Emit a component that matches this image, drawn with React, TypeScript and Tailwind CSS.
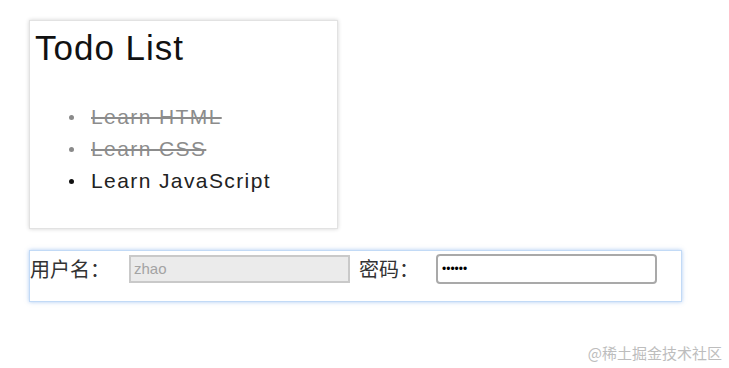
import React from "react";

const items = [
  { text: "Learn HTML", done: true },
  { text: "Learn CSS", done: true },
  { text: "Learn JavaScript", done: false },
];

export default function App() {
  return (
    <div className="relative w-[729px] h-[368px] bg-white overflow-hidden" style={{ fontFamily: '"Liberation Sans", Arial, "Noto Sans CJK SC", sans-serif' }}>
      <div className="pl-[29px] pt-[20px]">
        <div className="w-[309px] h-[209px] bg-white border border-[#e2e2e2] shadow-[0_0_4px_rgba(0,0,0,0.18)] pl-[5px] pt-[9px]">
          <h1 className="text-[35px] leading-none tracking-[1px] text-[#111]">Todo List</h1>
          <div className="mt-[36px] flex flex-col">
            {items.map((it) => (
              <div key={it.text} className="flex items-center h-[32px]">
                <span className={`ml-[34px] w-[5px] h-[5px] rounded-full ${it.done ? "bg-[#8a8a8a]" : "bg-[#111]"}`} />
                <span className={`ml-[17px] text-[21px] leading-[32px] tracking-[1.4px] ${it.done ? "text-[#8c8c8c] line-through decoration-[#8c8c8c]" : "text-[#222]"}`}>
                  {it.text}
                </span>
              </div>
            ))}
          </div>
        </div>
        <div className="mt-[21px] w-[653px] h-[52px] border border-[#c2daf6] shadow-[0_0_4px_rgba(90,150,230,0.5)] flex items-start pt-[3px]">
          <span className="text-[20px] leading-[30px] text-[#333] w-[99px] shrink-0" style={{ fontFamily: '"Noto Sans CJK SC", sans-serif' }}>用户名：</span>
          <div className="w-[221px] h-[28px] mt-[1px] bg-[#ebebeb] border-2 border-[#c9c9c9] flex items-center pl-[3px] text-[15px] text-[#a3a3a3]">zhao</div>
          <span className="ml-[9px] text-[20px] leading-[30px] text-[#333] w-[77px] shrink-0" style={{ fontFamily: '"Noto Sans CJK SC", sans-serif' }}>密码：</span>
          <div className="w-[221px] h-[30px] rounded-[4px] bg-white border-2 border-[#a9a9a9] flex items-center pl-[4px] text-[12px] text-black leading-none">••••••</div>
        </div>
      </div>
      <div className="absolute right-[7px] top-[343px] text-[15px] leading-[20px] text-[#bdbdbd]" style={{ fontFamily: '"Noto Sans CJK SC", sans-serif' }}>@稀土掘金技术社区</div>
    </div>
  );
}
